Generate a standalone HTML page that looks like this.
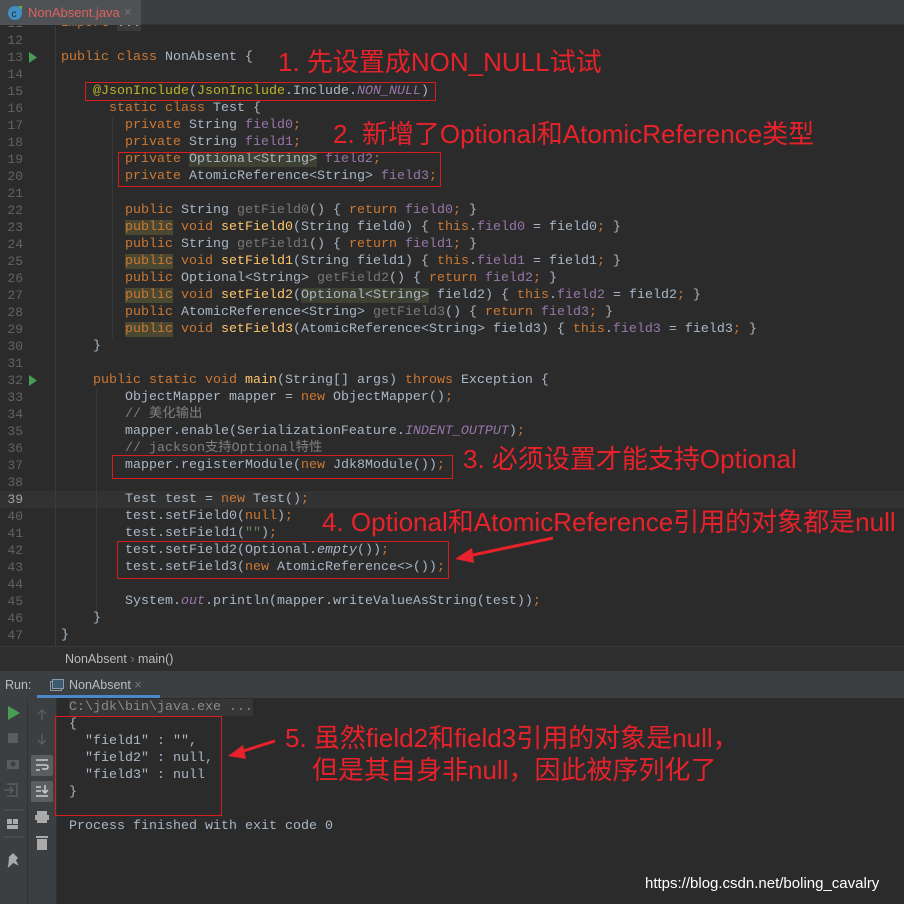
<!DOCTYPE html>
<html><head><meta charset="utf-8"><style>
*{margin:0;padding:0;box-sizing:border-box}
body{width:904px;height:904px;background:#2b2b2b;position:relative;overflow:hidden;font-family:"Liberation Mono","Noto Sans CJK SC",monospace;font-size:13.33px;color:#a9b7c6}
.abs{position:absolute}
.ln{position:absolute;left:0;width:23px;text-align:right;color:#606366;font-size:13px;line-height:17px}
.cl{position:absolute;left:61px;line-height:17px;white-space:pre}
.k{color:#cc7832}.f{color:#9876aa}.m{color:#ffc66d}.a{color:#bbb529}.g{color:#787878}.c{color:#808080}.s{color:#6a8759}
.fi{color:#9876aa;font-style:italic}.it{font-style:italic}
.hp{background:#4a4830}.ho{background:#3e4031}
.box{position:absolute;border:1px solid #d91c1c}
.note{position:absolute;color:#e8222a;font-family:"Liberation Sans","Noto Sans CJK SC",sans-serif;font-size:26px;white-space:nowrap;line-height:30px}
.ui{font-family:"Liberation Sans",sans-serif;font-size:12.5px;color:#bbbbbb}
</style></head><body>
<div class="abs" style="left:0;top:491px;width:904px;height:17px;background:#323232"></div>
<div class="abs" style="left:55px;top:26px;width:1px;height:620px;background:#3b3b3b"></div>
<div class="abs" style="left:112px;top:117px;width:1px;height:221px;background:#393939"></div>
<div class="abs" style="left:96px;top:389px;width:1px;height:226px;background:#393939"></div>

<div id="code">
<div class="ln" style="top:15px">11</div><div class="cl" style="top:15px"><span class="k">import</span> <span style="background:#3a3a3a">...</span></div>
<div class="ln" style="top:32px">12</div>
<div class="ln" style="top:49px">13</div><div class="cl" style="top:49px"><span class="k">public class</span> NonAbsent {</div>
<div class="ln" style="top:66px">14</div>
<div class="ln" style="top:83px">15</div><div class="cl" style="top:83px">    <span class="a">@JsonInclude</span>(<span class="a">JsonInclude</span>.Include.<span class="fi">NON_NULL</span>)</div>
<div class="ln" style="top:100px">16</div><div class="cl" style="top:100px">      <span class="k">static class</span> Test {</div>
<div class="ln" style="top:117px">17</div><div class="cl" style="top:117px">        <span class="k">private</span> String <span class="f">field0</span><span class="k">;</span></div>
<div class="ln" style="top:134px">18</div><div class="cl" style="top:134px">        <span class="k">private</span> String <span class="f">field1</span><span class="k">;</span></div>
<div class="ln" style="top:151px">19</div><div class="cl" style="top:151px">        <span class="k">private</span> <span class="ho">Optional&lt;String&gt;</span> <span class="f">field2</span><span class="k">;</span></div>
<div class="ln" style="top:168px">20</div><div class="cl" style="top:168px">        <span class="k">private</span> AtomicReference&lt;String&gt; <span class="f">field3</span><span class="k">;</span></div>
<div class="ln" style="top:185px">21</div>
<div class="ln" style="top:202px">22</div><div class="cl" style="top:202px">        <span class="k">public</span> String <span class="g">getField0</span>() { <span class="k">return</span> <span class="f">field0</span><span class="k">;</span> }</div>
<div class="ln" style="top:219px">23</div><div class="cl" style="top:219px">        <span class="k hp">public</span> <span class="k">void</span> <span class="m">setField0</span>(String field0) { <span class="k">this</span>.<span class="f">field0</span> = field0<span class="k">;</span> }</div>
<div class="ln" style="top:236px">24</div><div class="cl" style="top:236px">        <span class="k">public</span> String <span class="g">getField1</span>() { <span class="k">return</span> <span class="f">field1</span><span class="k">;</span> }</div>
<div class="ln" style="top:253px">25</div><div class="cl" style="top:253px">        <span class="k hp">public</span> <span class="k">void</span> <span class="m">setField1</span>(String field1) { <span class="k">this</span>.<span class="f">field1</span> = field1<span class="k">;</span> }</div>
<div class="ln" style="top:270px">26</div><div class="cl" style="top:270px">        <span class="k">public</span> Optional&lt;String&gt; <span class="g">getField2</span>() { <span class="k">return</span> <span class="f">field2</span><span class="k">;</span> }</div>
<div class="ln" style="top:287px">27</div><div class="cl" style="top:287px">        <span class="k hp">public</span> <span class="k">void</span> <span class="m">setField2</span>(<span class="ho">Optional&lt;String&gt;</span> field2) { <span class="k">this</span>.<span class="f">field2</span> = field2<span class="k">;</span> }</div>
<div class="ln" style="top:304px">28</div><div class="cl" style="top:304px">        <span class="k">public</span> AtomicReference&lt;String&gt; <span class="g">getField3</span>() { <span class="k">return</span> <span class="f">field3</span><span class="k">;</span> }</div>
<div class="ln" style="top:321px">29</div><div class="cl" style="top:321px">        <span class="k hp">public</span> <span class="k">void</span> <span class="m">setField3</span>(AtomicReference&lt;String&gt; field3) { <span class="k">this</span>.<span class="f">field3</span> = field3<span class="k">;</span> }</div>
<div class="ln" style="top:338px">30</div><div class="cl" style="top:338px">    }</div>
<div class="ln" style="top:355px">31</div>
<div class="ln" style="top:372px">32</div><div class="cl" style="top:372px">    <span class="k">public static void</span> <span class="m">main</span>(String[] args) <span class="k">throws</span> Exception {</div>
<div class="ln" style="top:389px">33</div><div class="cl" style="top:389px">        ObjectMapper mapper = <span class="k">new</span> ObjectMapper()<span class="k">;</span></div>
<div class="ln" style="top:406px">34</div><div class="cl" style="top:406px">        <span class="c">// 美化输出</span></div>
<div class="ln" style="top:423px">35</div><div class="cl" style="top:423px">        mapper.enable(SerializationFeature.<span class="fi">INDENT_OUTPUT</span>)<span class="k">;</span></div>
<div class="ln" style="top:440px">36</div><div class="cl" style="top:440px">        <span class="c">// jackson支持Optional特性</span></div>
<div class="ln" style="top:457px">37</div><div class="cl" style="top:457px">        mapper.registerModule(<span class="k">new</span> Jdk8Module())<span class="k">;</span></div>
<div class="ln" style="top:474px">38</div>
<div class="ln" style="top:491px;color:#a4a3a3">39</div><div class="cl" style="top:491px">        Test test = <span class="k">new</span> Test()<span class="k">;</span></div>
<div class="ln" style="top:508px">40</div><div class="cl" style="top:508px">        test.setField0(<span class="k">null</span>)<span class="k">;</span></div>
<div class="ln" style="top:525px">41</div><div class="cl" style="top:525px">        test.setField1(<span class="s">""</span>)<span class="k">;</span></div>
<div class="ln" style="top:542px">42</div><div class="cl" style="top:542px">        test.setField2(Optional.<span class="it">empty</span>())<span class="k">;</span></div>
<div class="ln" style="top:559px">43</div><div class="cl" style="top:559px">        test.setField3(<span class="k">new</span> AtomicReference&lt;&gt;())<span class="k">;</span></div>
<div class="ln" style="top:576px">44</div>
<div class="ln" style="top:593px">45</div><div class="cl" style="top:593px">        System.<span class="fi">out</span>.println(mapper.writeValueAsString(test))<span class="k">;</span></div>
<div class="ln" style="top:610px">46</div><div class="cl" style="top:610px">    }</div>
<div class="ln" style="top:627px">47</div><div class="cl" style="top:627px">}</div>
</div>
<svg class="abs" style="left:28px;top:52px" width="10" height="11"><path d="M1 0L9 5.5L1 11Z" fill="#499c54"/></svg>
<svg class="abs" style="left:28px;top:375px" width="10" height="11"><path d="M1 0L9 5.5L1 11Z" fill="#499c54"/></svg>

<div class="abs" style="left:0;top:0;width:904px;height:25px;background:#3c3f41;border-bottom:1px solid #323232"></div>
<div class="abs" style="left:0;top:0;width:141px;height:25px;background:#4e5254"></div>
<svg class="abs" style="left:7px;top:5px" width="16" height="16"><circle cx="8" cy="8" r="7" fill="#3d8fc6"/><text x="4.5" y="12" font-size="10" font-family="Liberation Sans" fill="#222">c</text><path d="M11 1L15 1L15 5Z" fill="#62b543"/></svg>
<div class="abs ui" style="left:28px;top:5px;color:#e06060;font-size:13px">NonAbsent.java</div>
<div class="abs ui" style="left:124px;top:4px;color:#777;font-size:13px">×</div>

<div class="abs" style="left:0;top:646px;width:904px;height:25px;background:#2e2e2e;border-top:1px solid #3a3a3a"></div>
<div class="abs ui" style="left:65px;top:652px">NonAbsent <span style="color:#777">›</span> main()</div>

<div class="abs" style="left:0;top:671px;width:904px;height:27px;background:#3c3f41"></div>
<div class="abs ui" style="left:5px;top:678px">Run:</div>
<svg class="abs" style="left:50px;top:679px" width="14" height="12"><rect x="0.5" y="2.5" width="11" height="9" fill="none" stroke="#8a9aa6"/><rect x="2.5" y="0.5" width="11" height="9" fill="#3c5a70" stroke="#8a9aa6"/></svg>
<div class="abs ui" style="left:69px;top:678px">NonAbsent <span style="color:#777">×</span></div>
<div class="abs" style="left:37px;top:695px;width:123px;height:3px;background:#4a88c7"></div>

<div class="abs" style="left:0;top:698px;width:28px;height:206px;background:#3c3f41;border-right:1px solid #323232"></div>
<div class="abs" style="left:28px;top:698px;width:29px;height:206px;background:#3c3f41;border-right:1px solid #323232"></div>
<svg class="abs" style="left:0;top:698px" width="57" height="206">
<path d="M8 8L20 15L8 22Z" fill="#499c54"/>
<rect x="8" y="35" width="10" height="10" fill="#5a5d5f"/>
<rect x="7" y="62" width="12" height="9" fill="#5a5d5f"/><circle cx="13" cy="66" r="2.5" fill="#3c3f41"/>
<path d="M7 86h10v12h-10M4 92h8M10 89l3 3-3 3" stroke="#5a5d5f" fill="none" stroke-width="1.5"/>
<line x1="3" y1="112" x2="24" y2="112" stroke="#555"/>
<rect x="7" y="121" width="5" height="5" fill="#aaa"/><rect x="13" y="121" width="5" height="5" fill="#aaa"/><rect x="7" y="127" width="11" height="4" fill="#aaa"/>
<line x1="3" y1="139" x2="24" y2="139" stroke="#555"/>
<path d="M9 160l4-4 4 4-2 2 2 4-4-2-5 5" stroke="#aaa" fill="#aaa" stroke-width="1.5"/>
<path d="M42 12v10M38 16l4-4 4 4" stroke="#5a5d5f" fill="none" stroke-width="1.5"/>
<path d="M42 36v10M38 42l4 4 4-4" stroke="#5a5d5f" fill="none" stroke-width="1.5"/>
<rect x="31" y="57" width="22" height="21" rx="2" fill="#5a5e60"/>
<path d="M36 62h12M36 67h10a2 2 0 0 1 0 4h-4M36 72h4" stroke="#ccc" fill="none" stroke-width="1.5"/>
<rect x="31" y="83" width="22" height="21" rx="2" fill="#5a5e60"/>
<path d="M36 89h5M36 93h5M36 98h12M45 87v8M42 92l3 3 3-3" stroke="#ccc" fill="none" stroke-width="1.5"/>
<rect x="37" y="113" width="10" height="4" fill="#aaa"/><rect x="35" y="117" width="14" height="5" fill="#aaa"/><rect x="37" y="122" width="10" height="3" fill="#aaa"/>
<rect x="36" y="138" width="12" height="2" fill="#aaa"/><rect x="37" y="141" width="10" height="11" fill="#aaa"/>
</svg>

<div class="abs" style="left:69px;top:699px;width:184px;height:17px;background:#363636"></div>
<div class="cl" style="left:69px;top:699px;color:#8c8c8c">C:\jdk\bin\java.exe ...</div>
<div class="cl" style="left:69px;top:716px">{</div>
<div class="cl" style="left:69px;top:733px">  "field1" : "",</div>
<div class="cl" style="left:69px;top:750px">  "field2" : null,</div>
<div class="cl" style="left:69px;top:767px">  "field3" : null</div>
<div class="cl" style="left:69px;top:784px">}</div>
<div class="cl" style="left:69px;top:818px">Process finished with exit code 0</div>

<div class="box" style="left:85px;top:82px;width:351px;height:19px"></div>
<div class="box" style="left:118px;top:152px;width:323px;height:35px"></div>
<div class="box" style="left:112px;top:455px;width:341px;height:24px"></div>
<div class="box" style="left:117px;top:541px;width:332px;height:38px"></div>
<div class="box" style="left:55px;top:716px;width:167px;height:100px"></div>

<div class="note" style="left:278px;top:47px">1. 先设置成NON_NULL试试</div>
<div class="note" style="left:333px;top:119px">2. 新增了Optional和AtomicReference类型</div>
<div class="note" style="left:463px;top:444px">3. 必须设置才能支持Optional</div>
<div class="note" style="left:322px;top:507px">4. Optional和AtomicReference引用的对象都是null</div>
<div class="note" style="left:285px;top:723px">5. 虽然field2和field3引用的对象是null，</div>
<div class="note" style="left:312px;top:755px">但是其自身非null，因此被序列化了</div>

<svg class="abs" style="left:0;top:0" width="904" height="904">
<line x1="553" y1="538" x2="468" y2="556" stroke="#e8222a" stroke-width="3"/>
<path d="M455 559L472 548L474 563Z" fill="#e8222a"/>
<line x1="275" y1="741" x2="240" y2="752" stroke="#e8222a" stroke-width="3"/>
<path d="M228 756L243 745L246 759Z" fill="#e8222a"/>
</svg>

<div class="abs" style="left:645px;top:875px;color:#fff;font-family:'Liberation Sans',sans-serif;font-size:15px">https://blog.csdn.net/boling_cavalry</div>
</body></html>
